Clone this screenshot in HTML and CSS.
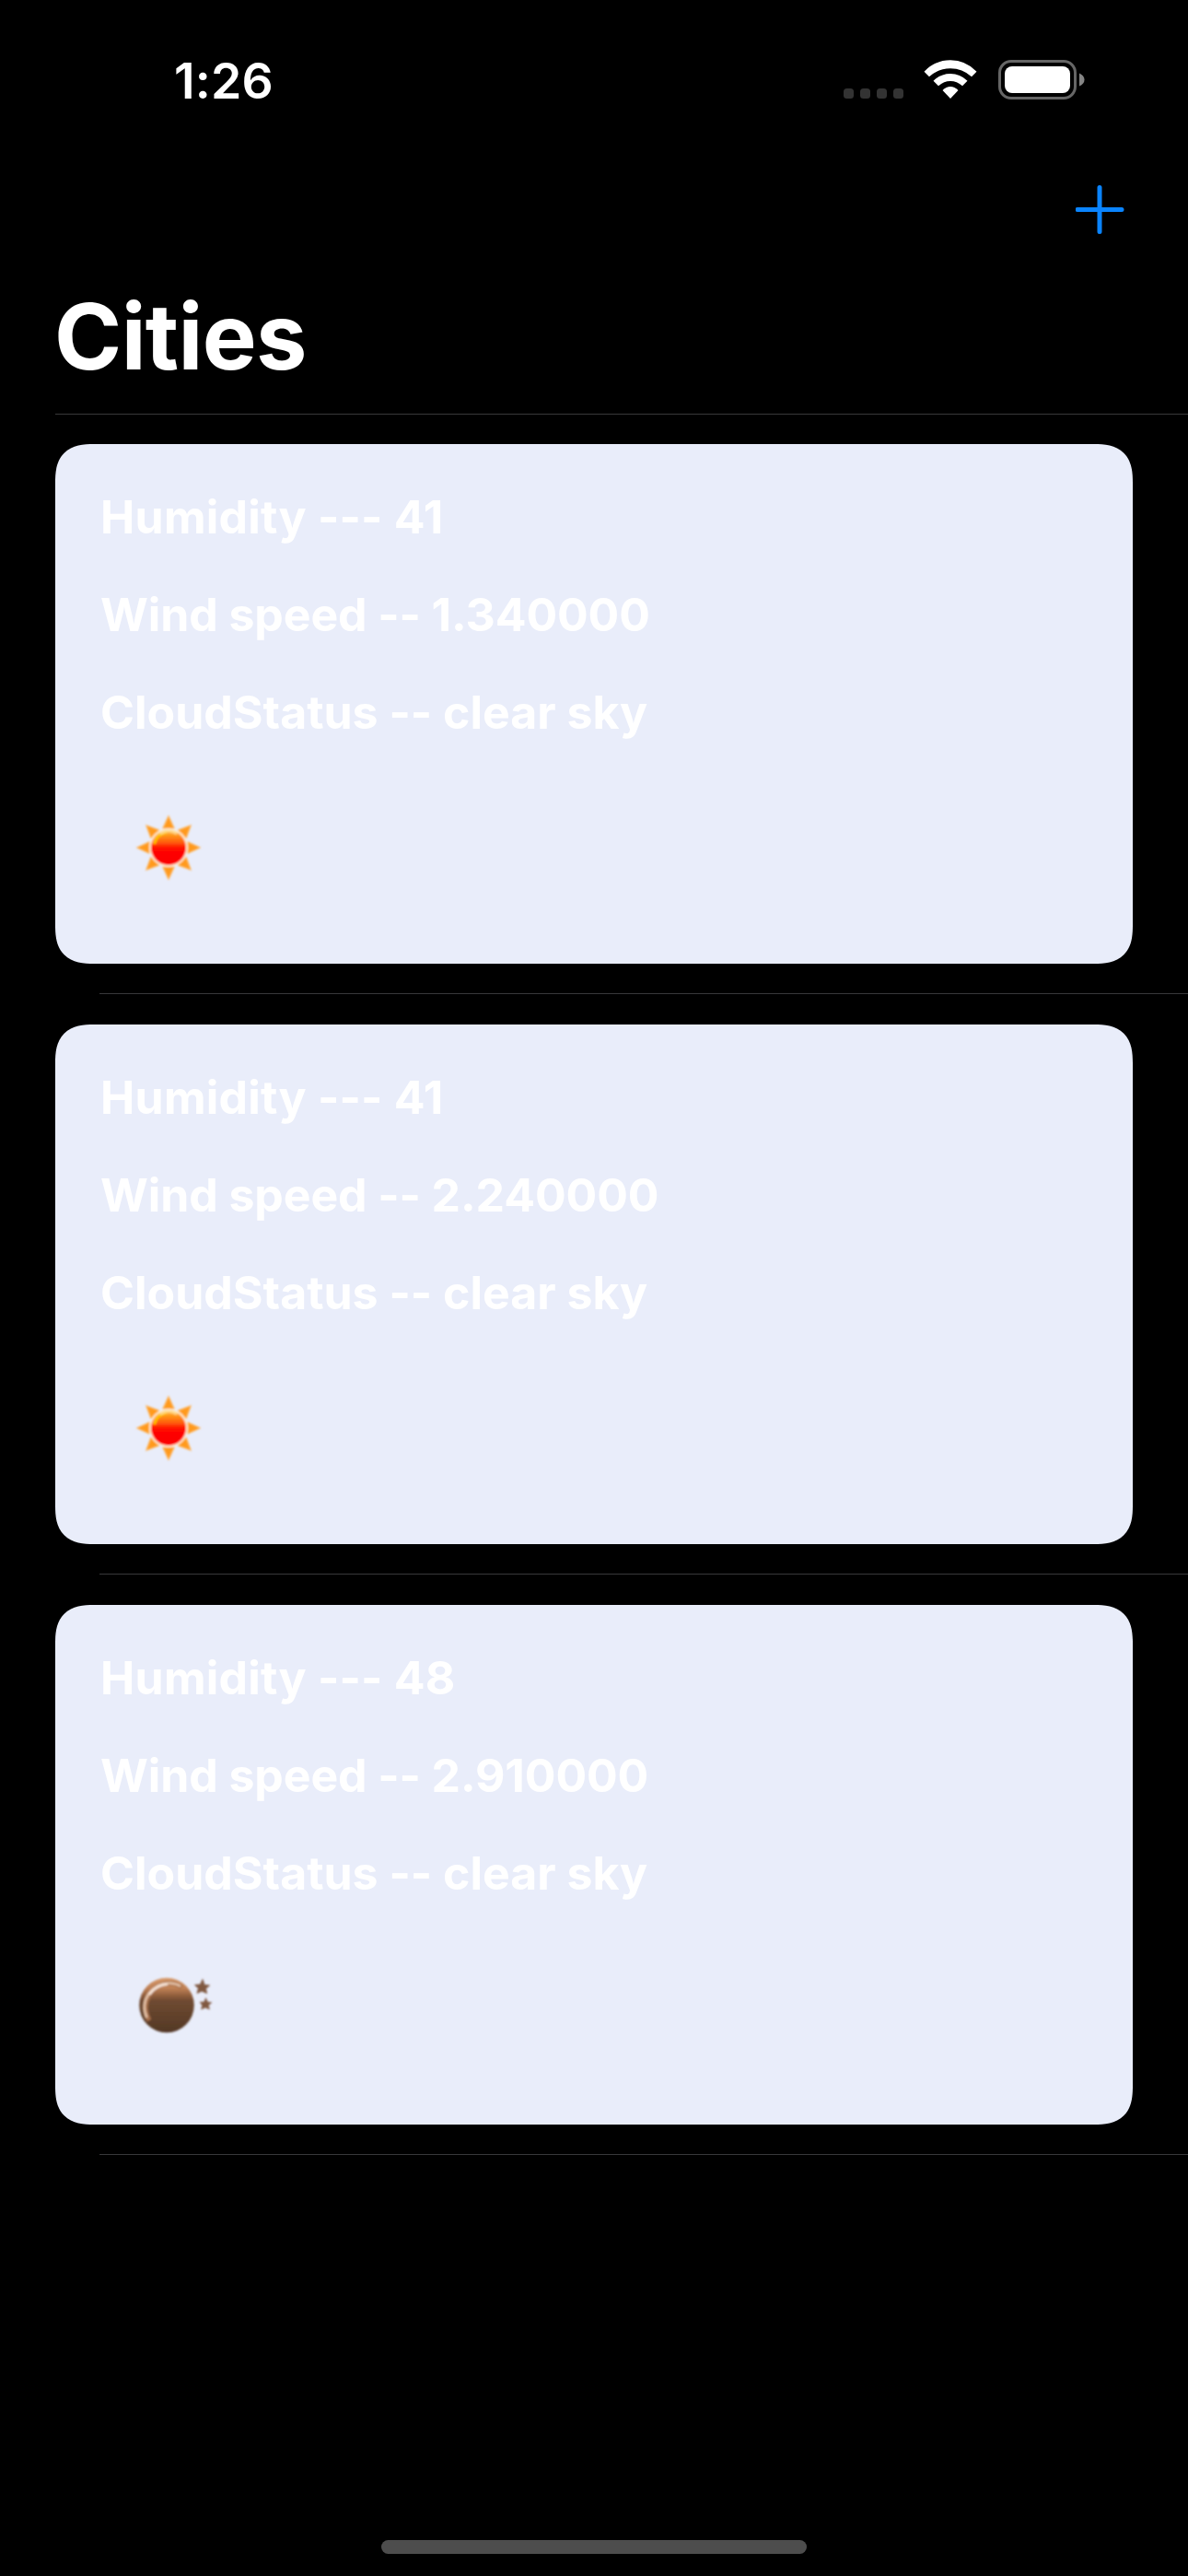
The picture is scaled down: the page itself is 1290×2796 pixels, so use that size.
FILE: index.html
```html
<!DOCTYPE html>
<html lang="en">
<head>
<meta charset="utf-8">
<title>Cities</title>
<link rel="stylesheet" href="styles.css">
</head>
<body>
<svg class="defs" aria-hidden="true">
  <defs>
    <linearGradient id="sun-fill" x1="0" y1="0" x2="0" y2="1">
      <stop offset="0" stop-color="#ffc04d"/>
      <stop offset=".14" stop-color="#ff9a1c"/>
      <stop offset=".36" stop-color="#ff5a0a"/>
      <stop offset=".52" stop-color="#ff0800"/>
      <stop offset="1" stop-color="#fb0000"/>
    </linearGradient>
    <linearGradient id="moon-fill" x1="0" y1="0" x2="0" y2="1">
      <stop offset="0" stop-color="#d99b6c"/>
      <stop offset=".2" stop-color="#bd7f54"/>
      <stop offset=".34" stop-color="#8a5a3a"/>
      <stop offset=".42" stop-color="#6f4a31"/>
      <stop offset="1" stop-color="#533825"/>
    </linearGradient>
    <filter id="soft" x="-20%" y="-20%" width="140%" height="140%"><feGaussianBlur stdDeviation=".8"/></filter>
    <symbol id="sun" viewBox="0 0 110 100">
      <g filter="url(#soft)">
        <g fill="#ff9a1a" stroke="#ffb04d" stroke-width="1.200">
          <path d="M53 16 59 29H47Z"/>
          <path d="M53 16 59 29H47Z" transform="rotate(45 53 50)"/>
          <path d="M53 16 59 29H47Z" transform="rotate(90 53 50)"/>
          <path d="M53 16 59 29H47Z" transform="rotate(135 53 50)"/>
          <path d="M53 16 59 29H47Z" transform="rotate(180 53 50)"/>
          <path d="M53 16 59 29H47Z" transform="rotate(225 53 50)"/>
          <path d="M53 16 59 29H47Z" transform="rotate(270 53 50)"/>
          <path d="M53 16 59 29H47Z" transform="rotate(315 53 50)"/>
        </g>
        <circle cx="53" cy="50" r="20.800" fill="#fff0d4"/>
        <circle cx="53" cy="50" r="19" fill="url(#sun-fill)"/>
        <path d="M37.500 46Q40 35 51 33.500" fill="none" stroke="#ffc400" stroke-width="3"/>
        <path d="M44 35Q53 29 62 35" fill="none" stroke="#ffd98a" stroke-width="2.500"/>
      </g>
    </symbol>
    <symbol id="moon" viewBox="0 0 120 100">
      <g filter="url(#soft)">
        <circle cx="51" cy="46.500" r="29.800" fill="url(#moon-fill)"/>
        <path d="M32 63C22 45 33 24 53 22.500Q61 22 67 27" fill="none" stroke="#a66e49" stroke-width="5"/>
        <path d="M29.500 60C21 41 35 22 55 22.500Q62 23 66 26" fill="none" stroke="#e6c3a8" stroke-width="2.500"/>
        <path d="M32 35Q39 25 52 23.500" fill="none" stroke="#f6e4d8" stroke-width="2.500"/>
        <path d="M90 18.500 92 24.500 97.500 25 93.500 28.500 94.500 33.500 89 31 84 33.500 85.500 28 81.500 24.500 87.500 24Z" fill="#805840" stroke="#805840"/>
        <path d="M93.500 38.500 95.500 43 100 43.500 96.500 46.500 97.500 51 93 49 88.500 51 89.500 46.500 87 43 91.500 43Z" fill="#805840" stroke="#805840" stroke-width=".5"/>
      </g>
    </symbol>
  </defs>
</svg>
<header class="status-bar">
  <div class="clock">1:26</div>
  <div class="indicators">
    <div class="signal"><i></i><i></i><i></i><i></i></div>
    <svg class="wifi" viewBox="0 0 58 43" fill="#fff">
      <path d="M.500 12.700Q12.500 .300 29 .300T57.500 12.700L52 18.200Q42 9.200 29 9.200T6 18.200Z"/>
      <path d="M10.500 22.700Q18.500 15 29 15T47.500 22.700L42 28.200Q36 23 29 23T16 28.200Z"/>
      <path d="M20.500 33Q24.500 29 29 29T37.500 33L29 42Z"/>
    </svg>
    <svg class="battery" viewBox="0 0 94 43">
      <rect x="1.500" y="1.500" width="82" height="40" rx="12.500" fill="none" stroke="#666" stroke-width="3"/>
      <rect x="7" y="7" width="71" height="29" rx="8" fill="#fff"/>
      <path d="M88 14.500Q93.500 17 93.500 21.500T88 28.500Z" fill="#858585"/>
    </svg>
  </div>
</header>
<nav class="nav-bar">
  <button class="add" aria-label="Add">
    <svg viewBox="0 0 53 53"><path d="M26 2.500V50.500M2 26.500H50" fill="none" stroke="#0a84ff" stroke-width="5" stroke-linecap="round"/></svg>
  </button>
</nav>
<h1 class="title">Cities</h1>
<main class="list">
  <section class="row">
    <article class="card">
      <p class="line humidity">Humidity --- 41</p>
      <p class="line wind">Wind speed -- 1.340000</p>
      <p class="line cloud">CloudStatus -- clear sky</p>
      <svg class="sun"><use href="#sun"/></svg>
    </article>
  </section>
  <section class="row">
    <article class="card">
      <p class="line humidity">Humidity --- 41</p>
      <p class="line wind">Wind speed -- 2.240000</p>
      <p class="line cloud">CloudStatus -- clear sky</p>
      <svg class="sun"><use href="#sun"/></svg>
    </article>
  </section>
  <section class="row">
    <article class="card">
      <p class="line humidity">Humidity --- 48</p>
      <p class="line wind">Wind speed -- 2.910000</p>
      <p class="line cloud">CloudStatus -- clear sky</p>
      <svg class="moon"><use href="#moon"/></svg>
    </article>
  </section>
</main>
<footer class="home"><div class="home-indicator"></div></footer>
</body>
</html>
```
FILE: styles.css
```css
* { box-sizing: border-box; margin: 0; padding: 0; }
body {
  width: 1290px;
  height: 2796px;
  background: #000;
  color: #fff;
  font-family: Inter, "Liberation Sans", sans-serif;
  display: flex;
  flex-direction: column;
  overflow: hidden;
}
.defs { position: absolute; width: 0; height: 0; }
.status-bar {
  height: 177px;
  padding: 0 112px 0 189px;
  display: flex;
  justify-content: space-between;
  align-items: flex-start;
}
.clock { margin-top: 57px; font-size: 53.500px; line-height: 62px; font-weight: 600; letter-spacing: .2px; }
.indicators { display: flex; margin-top: 65px; }
.signal { display: flex; gap: 7px; margin: 31px 22px 0 0; }
.signal i { width: 11px; height: 11px; border-radius: 3.500px; background: #333; }
.wifi { width: 58px; height: 43px; margin-right: 23px; }
.battery { width: 94px; height: 43px; }
.nav-bar { height: 132px; padding: 24px 69px 0 0; display: flex; justify-content: flex-end; align-items: flex-start; }
.add { width: 53px; height: 53px; background: none; border: 0; }
.add svg { display: block; width: 53px; height: 53px; }
.title { height: 140px; padding-left: 59px; font-size: 99px; line-height: 112px; font-weight: 700; letter-spacing: -.6px; }
.list { border-top: 1px solid #38383a; margin-left: 60px; }
.row { height: 629px; padding: 32px 60px 0 0; }
.row + .row { height: 630px; padding-top: 33px; }
.row::after { content: ""; display: block; height: 1px; margin: 32px -60px 0 48px; background: #38383a; }
.card { height: 564px; padding: 48px; background: #e9edfa; border-radius: 32px; }
@supports (corner-shape: superellipse(1.3)) {
  .card { border-radius: 42px; corner-shape: superellipse(1.4); }
}
.line { height: 106px; padding-left: 1px; font-size: 50px; line-height: 62px; font-weight: 700; white-space: nowrap; }
.humidity { letter-spacing: .2px; }
.wind { letter-spacing: -.1px; }
.cloud { letter-spacing: 0; }
.sun, .moon { display: block; height: 100px; margin: 22px 0 0 22px; }
.sun { width: 110px; }
.moon { width: 120px; }
.home { margin-top: auto; height: 39px; display: flex; justify-content: center; align-items: flex-start; }
.home-indicator { width: 462px; height: 15px; border-radius: 8px; background: #4d4d4d; }
```
